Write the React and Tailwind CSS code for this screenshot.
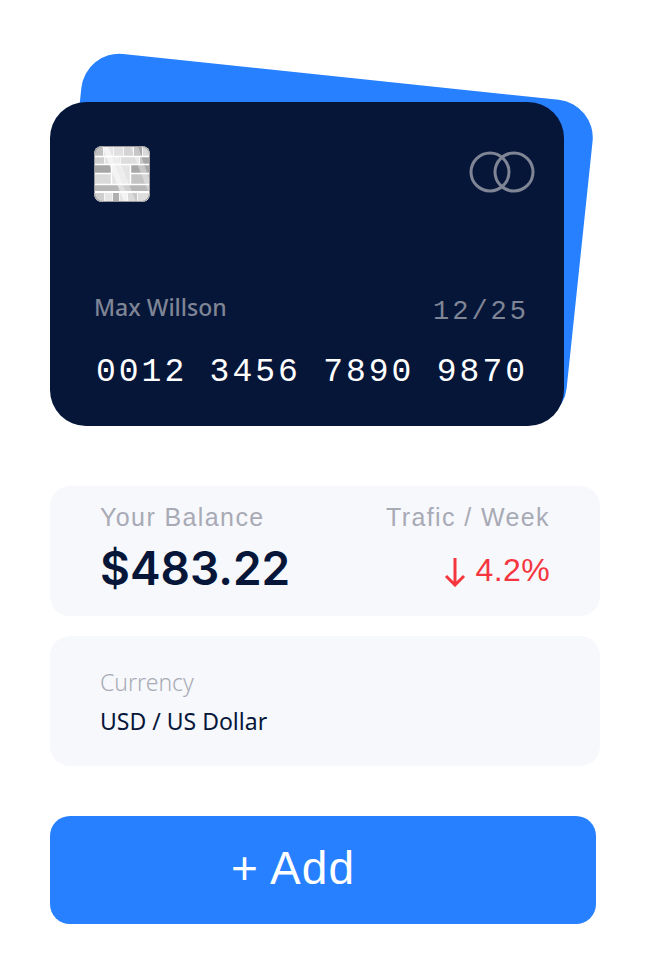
export default function App() {
  return (
    <div className="w-[650px] h-[974px] bg-white overflow-hidden px-[50px] pt-[102px]" style={{ fontFamily: "'Liberation Sans', sans-serif" }}>
      <div className="relative w-[514px] h-[324px]">
        <div className="absolute left-[17px] top-[-26px] w-[514px] h-[324px] rounded-[38px] bg-[#2680ff] rotate-[6deg]" />
        <div className="relative w-[514px] h-[324px] rounded-[36px] bg-[#061639] pt-[44px] pl-[44px] pr-[36px]">
          <div className="flex justify-between items-start">
            <svg width="56" height="56" viewBox="0 0 56 56" className="block">
              <defs>
                <clipPath id="chip"><rect x="0" y="0" width="56" height="56" rx="8" /></clipPath>
              </defs>
              <g clipPath="url(#chip)">
                <rect width="56" height="56" fill="#f6f6f6" />
                <rect x="1" y="1" width="8" height="9" fill="#c0c0c0" />
                <rect x="10" y="1" width="9" height="9" fill="#e6e6e6" />
                <rect x="20" y="1" width="9" height="9" fill="#e0e0e0" />
                <rect x="30" y="1" width="9" height="9" fill="#d4d4d4" />
                <rect x="40" y="1" width="8" height="9" fill="#a8a8a8" />
                <rect x="49" y="1" width="6" height="9" fill="#d8d8d8" />
                <rect x="1" y="11" width="9" height="7" fill="#cfcfcf" />
                <rect x="11" y="11" width="15" height="7" fill="#e4e4e4" />
                <rect x="27" y="11" width="18" height="7" fill="#dddddd" />
                <rect x="46" y="11" width="9" height="7" fill="#a8a8a8" />
                <rect x="1" y="19" width="16" height="8" fill="#a6a6a6" />
                <rect x="18" y="19" width="18" height="19" fill="#e4e4e4" />
                <rect x="37" y="19" width="18" height="8" fill="#a8a8a8" />
                <rect x="1" y="28" width="16" height="10" fill="#dadada" />
                <rect x="37" y="28" width="18" height="10" fill="#c4c4c4" />
                <rect x="1" y="39" width="54" height="6" fill="#b6b6b6" />
                <rect x="1" y="47" width="9" height="8" fill="#cfcfcf" />
                <rect x="11" y="47" width="7" height="8" fill="#e6e6e6" />
                <rect x="19" y="47" width="6" height="8" fill="#b0b0b0" />
                <rect x="26" y="47" width="7" height="8" fill="#e4e4e4" />
                <rect x="34" y="47" width="9" height="8" fill="#c8c8c8" />
                <rect x="44" y="47" width="11" height="8" fill="#dedede" />
                <path d="M0 38.500H56M0 46H56M0 10.500H56M0 18.500H56M0 27.500H18M37 27.500H56M17.500 18V38M36.500 18V38" stroke="#fff" strokeWidth="1.500" />
                <path d="M8 0L30 56H36L14 0Z" fill="#fff" opacity="0.55" />
                <path d="M18 10L36 56H42L24 10Z" fill="#fff" opacity="0.35" />
                <path d="M36 0L56 50V36L44 0Z" fill="#fff" opacity="0.35" />
              </g>
              <rect x="0.500" y="0.500" width="55" height="55" rx="8" fill="none" stroke="#9a9a9a" strokeWidth="1" />
            </svg>
            <svg width="66" height="42" viewBox="0 0 66 42" className="block mt-[5px] mr-[-7px]">
              <circle cx="21" cy="21" r="19" fill="none" stroke="#7f8595" strokeWidth="3" />
              <circle cx="45" cy="21" r="19" fill="none" stroke="#7f8595" strokeWidth="3" />
            </svg>
          </div>
          <div className="flex justify-between items-center mt-[90px] h-[34px]">
            <span className="text-[23px] font-medium text-[#7f8595] mt-[-4px]" style={{ fontFamily: "'Noto Sans', sans-serif" }}>Max Willson</span>
            <span className="text-[27px] tracking-[3px] text-[#7f8595] mt-[6px] mr-[-1px]" style={{ fontFamily: "'Liberation Mono', monospace" }}>12/25</span>
          </div>
          <div className="flex justify-between mt-[22px] pl-[2px] text-[33px] tracking-[3px] text-white" style={{ fontFamily: "'Liberation Mono', monospace" }}>
            <span>0012</span><span>3456</span><span>7890</span><span>9870</span>
          </div>
        </div>
      </div>

      <div className="mt-[60px] w-[550px] h-[130px] rounded-[20px] bg-[#f7f8fc] pl-[50px] pr-[50px] pt-[15px]">
        <div className="flex justify-between text-[25px] leading-[32px] text-[#a8aab5] tracking-[1.4px]">
          <span>Your Balance</span><span>Trafic / Week</span>
        </div>
        <div className="flex justify-between items-center mt-[6px]">
          <span className="text-[46px] leading-[58px] font-semibold text-[#061639]" style={{ fontFamily: "Inter, sans-serif" }}>$483.22</span>
          <span className="flex items-center gap-[9px] text-[32px] tracking-[0.4px] text-[#f5363f] mt-[4px]">
            <svg width="22" height="30" viewBox="0 0 22 30" className="block mt-[3px]">
              <path d="M11 1V28M2 19L11 28L20 19" fill="none" stroke="#f5363f" strokeWidth="3" />
            </svg>
            4.2%
          </span>
        </div>
      </div>

      <div className="mt-[20px] w-[550px] h-[130px] rounded-[20px] bg-[#f7f8fc] pl-[50px] pt-[30px]" style={{ fontFamily: "'Noto Sans', sans-serif" }}>
        <div className="text-[23px] leading-[32px] font-light text-[#a9abb6]">Currency</div>
        <div className="text-[23px] leading-[32px] mt-[7px] text-[#061639]">USD / US Dollar</div>
      </div>

      <button className="mt-[50px] block w-[546px] h-[108px] rounded-[20px] bg-[#2680ff] text-white text-[46px] tracking-[1px] text-center pr-[60px] pb-[4px]">+ Add</button>
    </div>
  );
}
